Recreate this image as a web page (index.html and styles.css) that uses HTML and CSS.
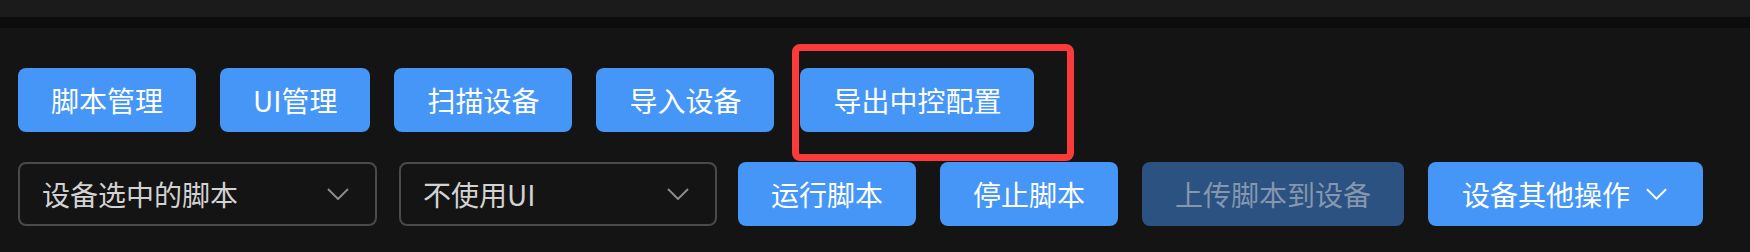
FILE: index.html
```html
<!DOCTYPE html>
<html lang="zh">
<head>
<meta charset="utf-8">
<link rel="stylesheet" href="styles.css">
</head>
<body>
<div class="topbar"></div>
<div class="divider"></div>
<main class="content">
  <div class="row row-top">
    <button class="btn">脚本管理</button>
    <button class="btn">UI管理</button>
    <button class="btn">扫描设备</button>
    <button class="btn">导入设备</button>
    <span class="highlight-wrap">
      <button class="btn">导出中控配置</button>
      <span class="highlight"></span>
    </span>
  </div>
  <div class="row row-bottom">
    <div class="select select-script">
      <span class="select-text">设备选中的脚本</span>
      <svg class="chev chev-gray" viewBox="0 0 22 12"><path d="M1 1 L11 11 L21 1"/></svg>
    </div>
    <div class="select select-ui">
      <span class="select-text">不使用UI</span>
      <svg class="chev chev-gray" viewBox="0 0 22 12"><path d="M1 1 L11 11 L21 1"/></svg>
    </div>
    <button class="btn">运行脚本</button>
    <button class="btn">停止脚本</button>
    <button class="btn btn-disabled">上传脚本到设备</button>
    <button class="btn btn-drop">设备其他操作<svg class="chev chev-white" viewBox="0 0 22 12"><path d="M1 1 L11 11 L21 1"/></svg></button>
  </div>
</main>
</body>
</html>
```
FILE: styles.css
```css
html, body {
  margin: 0;
  padding: 0;
  background: #141414;
  font-family: "Noto Sans CJK SC", "Noto Sans", sans-serif;
}
.topbar {
  height: 17px;
  background: #1b1b1b;
}
.divider {
  height: 11px;
  background: #0c0c0c;
}
.content {
  padding: 40px 0 0 18px;
}
.row {
  display: flex;
  align-items: center;
}
.row-top {
  gap: 24px;
}
.row-bottom {
  margin-top: 30px;
  gap: 24px;
}
.btn {
  height: 64px;
  padding: 0 33px;
  border: none;
  border-radius: 8px;
  background: #4596f6;
  color: #ffffff;
  font-family: inherit;
  font-size: 28px;
  line-height: 64px;
  display: inline-flex;
  align-items: center;
  white-space: nowrap;
}
.btn-disabled {
  background: #2b5280;
  color: #8497ae;
}
.btn-drop {
  padding: 0 36px 0 34px;
}
.highlight-wrap {
  position: relative;
  display: inline-flex;
  margin-left: 2px;
}
.highlight {
  position: absolute;
  left: -8px;
  top: -24px;
  width: 282px;
  height: 117px;
  box-sizing: border-box;
  border: 7px solid #fb3a3a;
  border-radius: 8px;
  pointer-events: none;
}
.select {
  box-sizing: border-box;
  height: 64px;
  border: 2px solid #4a4a4a;
  border-radius: 8px;
  display: flex;
  align-items: center;
  justify-content: space-between;
  padding: 0 26px 0 22px;
  color: #d2d2d2;
  font-size: 28px;
}
.select-script {
  width: 359px;
  margin-right: -2px;
}
.select-ui {
  width: 318px;
  margin-right: -3px;
}
.chev {
  width: 22px;
  height: 12px;
  fill: none;
  stroke-width: 2;
}
.chev-gray {
  stroke: #8a8a8a;
}
.chev-white {
  stroke: #ffffff;
  width: 21px;
  margin-left: 16px;
}
```
